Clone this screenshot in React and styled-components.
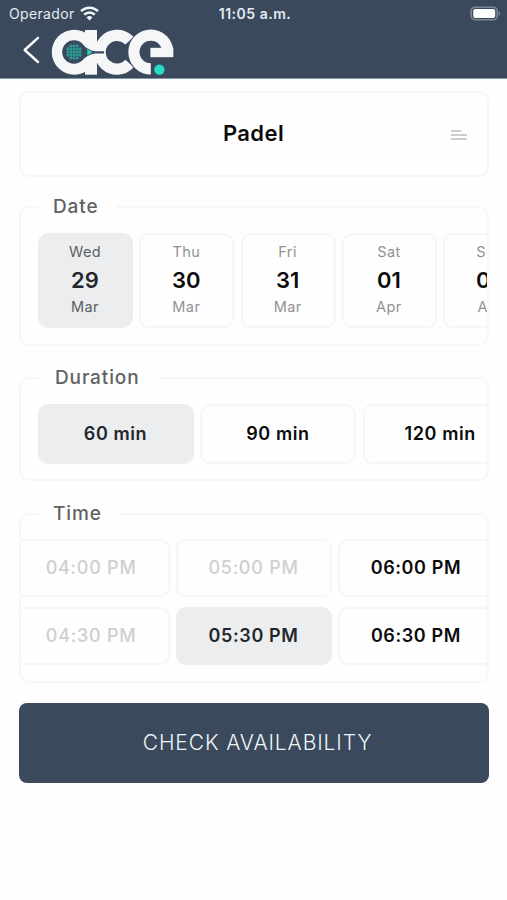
import React from 'react';
import styled, { createGlobalStyle } from 'styled-components';

const dates = [
  { day: 'Wed', number: '29', month: 'Mar', selected: true },
  { day: 'Thu', number: '30', month: 'Mar' },
  { day: 'Fri', number: '31', month: 'Mar' },
  { day: 'Sat', number: '01', month: 'Apr' },
  { day: 'Sun', number: '02', month: 'Apr' },
];

const durations = [
  { label: '60 min', selected: true },
  { label: '90 min' },
  { label: '120 min' },
];

const times = [
  { label: '04:00 PM', disabled: true },
  { label: '05:00 PM', disabled: true },
  { label: '06:00 PM' },
  { label: '04:30 PM', disabled: true },
  { label: '05:30 PM', selected: true },
  { label: '06:30 PM' },
];

const strings = [0, 1, 2, 3, 4];

export default function App() {
  return (
    <Screen>
      <GlobalStyle />
      <Header>
        <StatusBar>
          <Carrier>
            Operador
            <WifiIcon />
          </Carrier>
          <Clock>11:05 a.m.</Clock>
          <BatteryIcon />
        </StatusBar>
        <NavBar>
          <BackIcon />
          <Logo />
        </NavBar>
      </Header>

      <Content>
        <SportCard>
          <SportName>Padel</SportName>
          <MenuIcon />
        </SportCard>

        <Group $height={151} $top={18}>
          <Legend>Date</Legend>
          <Strip $gap={6.3}>
            {dates.map((date) => (
              <DateCard key={date.number} $selected={date.selected}>
                <DateText $selected={date.selected}>{date.day}</DateText>
                <DateNumber $selected={date.selected}>{date.number}</DateNumber>
                <DateText $selected={date.selected}>{date.month}</DateText>
              </DateCard>
            ))}
          </Strip>
        </Group>

        <Group $height={115} $top={20}>
          <Legend $indent={17}>Duration</Legend>
          <Strip $gap={6.4}>
            {durations.map((item) => (
              <Chip key={item.label} $height={60} $selected={item.selected}>
                {item.label}
              </Chip>
            ))}
          </Strip>
        </Group>

        <Group $height={181} $top={21} $inner={13}>
          <Legend>Time</Legend>
          <TimeGrid>
            {times.map((item) => (
              <Chip
                key={item.label}
                $height={58}
                $selected={item.selected}
                $disabled={item.disabled}
              >
                {item.label}
              </Chip>
            ))}
          </TimeGrid>
        </Group>

        <SubmitButton>CHECK AVAILABILITY</SubmitButton>
      </Content>
    </Screen>
  );
}

function WifiIcon() {
  return (
    <svg width='19' height='15' viewBox='0 0 19 15' fill='none' stroke='#f3f7fb' strokeWidth='2.5'>
      <path d='M1 5.2a12.2 12.2 0 0 1 17 0' />
      <path d='M4.2 8.7a7.6 7.6 0 0 1 10.6 0' />
      <path d='M9.5 14.4 6.6 11.4a4.2 4.2 0 0 1 5.8 0z' fill='#f3f7fb' stroke='none' />
    </svg>
  );
}

function BatteryIcon() {
  return (
    <svg width='31' height='15' viewBox='0 0 31 15'>
      <rect x='1.2' y='1.2' width='26' height='12.6' rx='4' fill='none' stroke='#7c8793' strokeWidth='1.6' />
      <rect x='3.2' y='3' width='22' height='9' rx='2' fill='#fff' />
      <path d='M28.6 5.2c2.2.6 2.2 4 0 4.6z' fill='#7c8793' />
    </svg>
  );
}

function BackIcon() {
  return (
    <svg width='18' height='28' viewBox='0 0 18 28' fill='none' stroke='#fff' strokeWidth='2.4' strokeLinecap='round' strokeLinejoin='round'>
      <path d='M16 1.9 2.7 14 16 26' />
    </svg>
  );
}

function MenuIcon() {
  return (
    <svg width='16' height='10' viewBox='0 0 16 10' stroke='#bdbdbd' strokeWidth='1.4'>
      <path d='M0 1h10M0 5h16M0 9h16' />
    </svg>
  );
}

function Logo() {
  return (
    <svg width='124' height='48' viewBox='51 28 124 48' fill='none'>
      {/* racket head with its handle */}
      <circle cx='74.3' cy='52.2' r='22.5' fill='#f5f6f8' />
      <rect x='85' y='30' width='12' height='44.7' fill='#f5f6f8' />
      <circle cx='117' cy='52.2' r='16.9' stroke='#f5f6f8' strokeWidth='11.2' pathLength='360' strokeDasharray='276 84' transform='rotate(42 117 52.2)' />
      <circle cx='74' cy='52' r='11.8' fill='#3a495b' />
      <path d='M81 42.4Q86.5 49.8 95 51.2H104V53.4H95Q86.5 54.8 81 61.6z' fill='#3a495b' />
      <path d='M87.2 49 92.6 52.2 87.2 55.4z' fill='#22d3bd' />
      <g stroke='#24b3a8' strokeWidth='1'>
        {strings.map((n) => (
          <React.Fragment key={n}>
            <line x1={68 + n * 3} x2={68 + n * 3} y1={n % 4 ? 44.2 : 47} y2={n % 4 ? 59.8 : 57} />
            <line y1={46 + n * 3} y2={46 + n * 3} x1={n % 4 ? 66.2 : 69} x2={n % 4 ? 81.8 : 79} />
          </React.Fragment>
        ))}
      </g>
      {/* last ring is cut out of the middle one */}
      <circle cx='150.8' cy='52' r='23.4' fill='#3a495b' />
      <circle cx='150.8' cy='52' r='16.9' stroke='#f5f6f8' strokeWidth='11.2' pathLength='360' strokeDasharray='270 90' transform='rotate(90 150.8 52)' />
      <rect x='150.4' y='47.8' width='22.9' height='9.4' fill='#f5f6f8' />
      <circle cx='159.4' cy='69.6' r='5.2' fill='#25dcc5' />
    </svg>
  );
}

const GlobalStyle = createGlobalStyle`
  * {
    box-sizing: border-box;
  }

  body {
    margin: 0;
    background-color: #fefefe;
    font-family: Inter, 'Liberation Sans', sans-serif;
  }
`;

const Screen = styled.div`
  width: 507px;
  height: 900px;
  overflow: hidden;
`;

const Header = styled.header`
  height: 79px;
  background-color: #3a495b;
  border-bottom: 1px solid #8297aa;
`;

const StatusBar = styled.div`
  height: 27px;
  padding: 0 6px 0 9px;
  display: grid;
  grid-template-columns: 1fr auto 1fr;
  align-items: center;
  color: #e4ebf2;
  font-size: 14px;

  & > svg {
    justify-self: end;
    margin-top: -1px;
  }
`;

const Carrier = styled.div`
  display: flex;
  align-items: center;
  gap: 5px;
  letter-spacing: 0.35px;
`;

const Clock = styled.div`
  font-weight: 600;
  letter-spacing: 0.5px;
`;

const NavBar = styled.div`
  height: 51px;
  padding: 1px 0 0 22px;
  display: flex;
  align-items: flex-start;
  gap: 11px;

  & > svg:first-child {
    margin-top: 8px;
  }
`;

const Content = styled.main`
  padding: 12px 18px 0 19px;
`;

const SportCard = styled.div`
  height: 86px;
  padding: 0 20px 0 19px;
  display: grid;
  grid-template-columns: 1fr auto 1fr;
  align-items: center;
  border: 2px solid #f6f6f6;
  border-radius: 10px;

  & > svg {
    justify-self: end;
    margin-top: 1px;
  }
`;

const SportName = styled.h1`
  grid-column: 2;
  margin: 0 0 2px;
  color: #0b0b0c;
  font-size: 22px;
  font-weight: 600;
  letter-spacing: 0.4px;
`;

const Group = styled.fieldset`
  height: ${(props) => props.$height}px;
  min-width: 0;
  margin: ${(props) => props.$top}px 0 0;
  padding: ${(props) => props.$inner || 14}px 0 0;
  border: 2px solid #f7f7f7;
  border-radius: 10px;
`;

const Legend = styled.legend`
  height: 24px;
  margin-left: 17px;
  padding: 0 17px 0 ${(props) => props.$indent || 15}px;
  color: #626262;
  font-size: 19px;
  font-weight: 500;
  line-height: 24px;
  letter-spacing: 0.9px;
`;

const Strip = styled.div`
  padding-left: 17px;
  display: flex;
  gap: ${(props) => props.$gap}px;
  overflow: hidden;
`;

const TimeGrid = styled.div`
  display: grid;
  grid-template-columns: repeat(3, 156px);
  justify-content: center;
  gap: 10px 6.4px;
  overflow: hidden;
`;

const Card = styled.div`
  flex-shrink: 0;
  display: flex;
  align-items: center;
  border: 2px solid ${(props) => (props.$selected ? '#ebedef' : '#f6f6f6')};
  border-radius: 10px;
  background-color: ${(props) => (props.$selected ? '#ebedef' : '#fefefe')};
`;

const DateCard = styled(Card)`
  width: 95px;
  height: 95px;
  padding: 6px 1px 0 0;
  flex-direction: column;
`;

const DateText = styled.span`
  color: ${(props) => (props.$selected ? '#5c6064' : '#929292')};
  font-size: 14.5px;
  line-height: 22px;
  letter-spacing: 0.4px;
`;

const DateNumber = styled.span`
  color: ${(props) => (props.$selected ? '#23272b' : '#0b0b0c')};
  font-size: 22px;
  font-weight: 600;
  line-height: 31px;
  padding-top: 2px;
`;

const Chip = styled(Card)`
  width: 156px;
  height: ${(props) => props.$height}px;
  justify-content: center;
  padding: 0 1px 2px 0;
  color: ${(props) =>
    props.$disabled ? '#cfcfcf' : props.$selected ? '#23272b' : '#0b0b0c'};
  font-size: 18px;
  font-weight: ${(props) => (props.$disabled ? 500 : 600)};
  letter-spacing: ${(props) => (props.$disabled ? '0.75px' : '0.6px')};
`;

const SubmitButton = styled.button`
  width: 100%;
  height: 80px;
  margin-top: 20px;
  padding: 0 0 2px 7px;
  border: none;
  border-radius: 8px;
  background-color: #3a495b;
  color: #eef3f8;
  font-family: inherit;
  font-size: 21px;
  font-weight: 300;
  letter-spacing: 0.9px;
`;
